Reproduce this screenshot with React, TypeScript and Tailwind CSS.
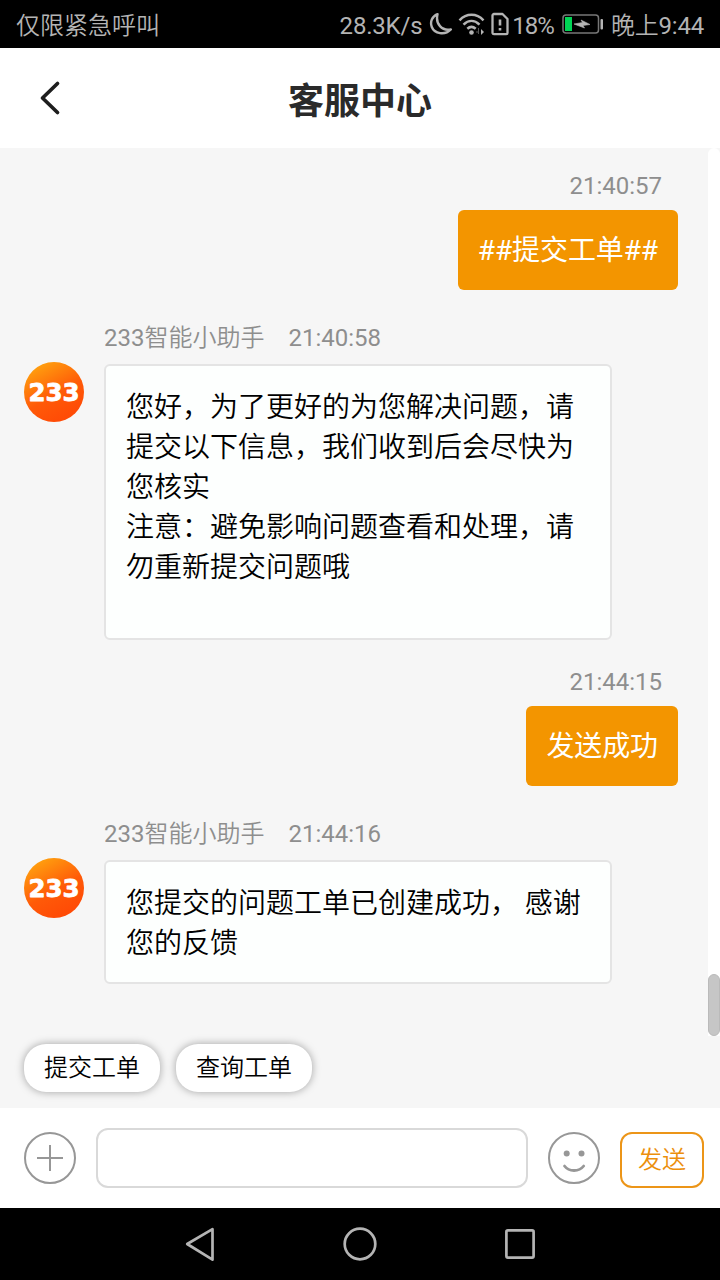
import React from 'react';

interface Message {
  id: number;
  from: 'user' | 'bot';
  time: string;
  lines: string[];
  extraSpace?: boolean;
}

const messages: Message[] = [
  { id: 1, from: 'user', time: '21:40:57', lines: ['##提交工单##'] },
  {
    id: 2,
    from: 'bot',
    time: '21:40:58',
    lines: [
      '您好，为了更好的为您解决问题，请提交以下信息，我们收到后会尽快为您核实',
      '注意：避免影响问题查看和处理，请勿重新提交问题哦',
    ],
    extraSpace: true,
  },
  { id: 3, from: 'user', time: '21:44:15', lines: ['发送成功'] },
  { id: 4, from: 'bot', time: '21:44:16', lines: ['您提交的问题工单已创建成功， 感谢您的反馈'] },
];

const quickReplies = ['提交工单', '查询工单'];

const StatusBar: React.FC = () => (
  <div className="flex h-12 shrink-0 items-center justify-between bg-black pr-4 pl-4 text-2xl text-[#b4b4b4]">
    <span className="pt-[3px] font-[350] whitespace-nowrap">仅限紧急呼叫</span>
    <div className="flex items-center whitespace-nowrap">
      <span className="pt-[3px] tracking-[-0.2px]">28.3K/s</span>
      <svg className="ml-[7px] h-6 w-6" viewBox="0 0 24 24" fill="none" stroke="currentColor" strokeWidth="2.4" strokeLinejoin="round">
        <path d="M8.500 2.200C3 4.500.8 10 2.800 15c2.600 6.700 13 8.800 19 2.400C13 19.200 6.200 12 8.500 2.200Z" />
      </svg>
      <svg className="ml-[5px] h-6 w-[27px]" viewBox="0 0 27 24" fill="none" stroke="currentColor" strokeWidth="2.5">
        <path d="M1.500 8.300C8.500 1 18.500 1 25.500 8.300M5.500 12.700C10.500 7.800 16.500 7.800 21.500 12.700M9.300 16.700C12 14.300 15 14.300 17.700 16.700" />
        <circle cx="13.500" cy="20.500" r="2.300" fill="currentColor" stroke="none" />
        <path d="M20.500 16v6M18 20h3" stroke="#555" strokeWidth="1" />
        <path d="M23 17v6l3-3Z" fill="currentColor" stroke="none" />
      </svg>
      <svg className="ml-[6px] h-6 w-[18px]" viewBox="0 0 18 24" fill="none" stroke="currentColor" strokeWidth="2.300" strokeLinejoin="round">
        <path d="M3 2h8.500L16.500 7v14a1.200 1.200 0 0 1-1.200 1.200H3A1.500 1.500 0 0 1 1.500 21V3.500A1.500 1.500 0 0 1 3 2Z" />
        <path d="M9 7.500v6M9 16v2.500" strokeWidth="2.600" />
      </svg>
      <span className="ml-[3px] pt-[3px] tracking-[-1px]">18%</span>
      <svg className="ml-[8px] h-[22px] w-[42px]" viewBox="0 0 42 22" fill="none">
        <rect x="1" y="2" width="35.500" height="18" rx="3" stroke="#777" strokeWidth="1.500" />
        <rect x="3" y="4" width="7" height="14" fill="#00d455" />
        <path d="M12 11 20.500 9.500 19 7 28 11.500 21 12.500 22.500 15Z" fill="currentColor" stroke="currentColor" strokeWidth="0.600" />
        <rect x="38.500" y="6" width="2.500" height="10.500" rx="1" fill="currentColor" />
      </svg>
      <span className="ml-[7px] pt-[3px] font-[350] tracking-[-0.2px]">
        晚上<span className="font-normal">9:44</span>
      </span>
    </div>
  </div>
);

const Header: React.FC = () => (
  <header className="flex h-[100px] shrink-0 items-center bg-white px-9 pt-1">
    <button className="h-10 w-7" title="返回">
      <svg className="h-10 w-7" viewBox="0 0 28 40" fill="none" stroke="#1e1e1e" strokeWidth="3.700" strokeLinecap="round" strokeLinejoin="round">
        <path d="M21.500 3.500 6.500 18 21.500 32.500" />
      </svg>
    </button>
    <h1 className="flex-1 pt-1 pr-7 text-center text-4xl font-bold text-[#2a2a2a]">客服中心</h1>
  </header>
);

const Avatar: React.FC = () => (
  <svg className="-mt-0.5 h-[60px] w-[60px] shrink-0" viewBox="0 0 60 60">
    <defs>
      <linearGradient id="avatar" x1="0.15" y1="0.05" x2="0.65" y2="0.95">
        <stop offset="0" stopColor="#ffa40f" />
        <stop offset="0.6" stopColor="#ff5a08" />
        <stop offset="1" stopColor="#ff4b06" />
      </linearGradient>
    </defs>
    <circle cx="30" cy="30" r="30" fill="url(#avatar)" />
    <text
      x="4.500"
      y="39.300"
      textLength="51"
      lengthAdjust="spacingAndGlyphs"
      fill="#fff"
      stroke="#fff"
      strokeWidth="0.800"
      strokeLinejoin="round"
      className="font-['DejaVu_Sans',sans-serif] text-[25px] font-bold"
    >
      233
    </text>
  </svg>
);

const MessageItem: React.FC<{ message: Message }> = ({ message }) => {
  if (message.from === 'user') {
    return (
      <div className="mb-9 flex flex-col items-end pr-[30px]">
        <span className="pr-4 text-2xl leading-6 text-[#8e8e8e]">{message.time}</span>
        <div className="mt-3 rounded-md bg-[#f39500] px-5 pt-[21px] pb-[19px] text-[28px] leading-10 tracking-[-0.1px] text-white">
          {message.lines[0]}
        </div>
      </div>
    );
  }

  return (
    <div className="mb-[30px] pl-6">
      <div className="flex gap-6 pl-20 text-2xl leading-6 text-[#8e8e8e]">
        <span>
          233<span className="font-[350]">智能小助手</span>
        </span>
        <span>{message.time}</span>
      </div>
      <div className="mt-[14px] flex items-start gap-5">
        <Avatar />
        <div
          className={`w-[508px] rounded-md border-2 border-[#e4e4e4] bg-[#fdfffe] px-5 pt-[22px] text-[28px] leading-10 font-[350] text-black ${
            message.extraSpace ? 'pb-[50px]' : 'pb-[18px]'
          }`}
        >
          {message.lines.map((line) => (
            <p key={line}>{line}</p>
          ))}
        </div>
      </div>
    </div>
  );
};

const InputBar: React.FC = () => (
  <div className="flex h-[100px] shrink-0 items-center bg-white pr-4 pl-6">
    <button title="更多">
      <svg className="h-[52px] w-[52px]" viewBox="0 0 52 52" fill="none" stroke="#979797" strokeWidth="2">
        <circle cx="26" cy="26" r="25" />
        <path d="M26 13v26M13 26h26" />
      </svg>
    </button>
    <input type="text" className="ml-5 h-[60px] w-[432px] rounded-xl border-2 border-[#d9d9d9] bg-white px-4 text-[28px] outline-none" />
    <button className="ml-5" title="表情">
      <svg className="h-[52px] w-[52px]" viewBox="0 0 52 52" fill="none" stroke="#979797" strokeWidth="2">
        <circle cx="26" cy="26" r="25" />
        <circle cx="18.700" cy="21.500" r="3" fill="#979797" stroke="none" />
        <circle cx="33.500" cy="21.500" r="3" fill="#979797" stroke="none" />
        <path d="M16.500 34C21 40 31 40 35.700 34" strokeWidth="2.800" strokeLinecap="round" />
      </svg>
    </button>
    <button className="mt-1 ml-5 h-14 w-[84px] rounded-xl border-2 border-[#ec9518] text-2xl leading-6 font-[350] text-[#ec8f0c]">发送</button>
  </div>
);

const NavigationBar: React.FC = () => (
  <div className="flex h-[72px] shrink-0 items-center justify-center gap-[120px] bg-black">
    <svg className="h-10 w-10" viewBox="0 0 40 40" fill="none" stroke="#b4b4b4" strokeWidth="2.700" strokeLinejoin="round">
      <path d="M32.500 5.200v30.500L7.200 20Z" />
    </svg>
    <svg className="h-10 w-10" viewBox="0 0 40 40" fill="none" stroke="#b4b4b4" strokeWidth="2.700">
      <circle cx="20" cy="20" r="15.300" />
    </svg>
    <svg className="h-10 w-10" viewBox="0 0 40 40" fill="none" stroke="#b4b4b4" strokeWidth="2.700">
      <rect x="6.400" y="6.400" width="27.200" height="27.200" rx="1.500" />
    </svg>
  </div>
);

const App: React.FC = () => {
  return (
    <div className="flex h-[1280px] w-[720px] flex-col overflow-hidden bg-[#f6f6f6] font-[Roboto,'Noto_Sans_CJK_SC',sans-serif]">
      <StatusBar />
      <Header />

      <main className="flex h-[888px] shrink-0">
        <div className="flex flex-1 flex-col pt-[26px]">
          {messages.map((message) => (
            <MessageItem key={message.id} message={message} />
          ))}
        </div>
        <div className="flex w-3 flex-col justify-end rounded-t-md bg-white">
          <div className="h-[62px] rounded-full border border-[#bababa] bg-[#c6c6c6]" />
        </div>
      </main>

      <div className="flex h-[72px] shrink-0 items-start gap-4 px-6 pt-2">
        {quickReplies.map((reply) => (
          <button
            key={reply}
            className="h-12 rounded-[22px] bg-white px-5 text-2xl leading-6 font-[350] text-black shadow-[0_0_8px_rgba(0,0,0,0.35)]"
          >
            {reply}
          </button>
        ))}
      </div>

      <InputBar />
      <NavigationBar />
    </div>
  );
};

export default App;
